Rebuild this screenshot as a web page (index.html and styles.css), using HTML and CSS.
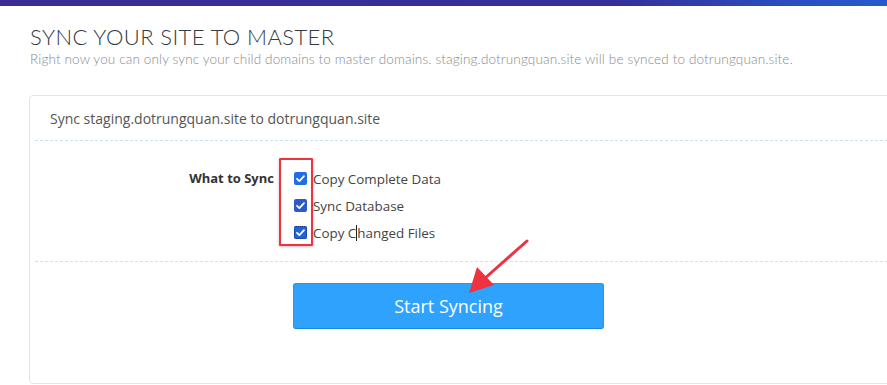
FILE: index.html
```html
<!DOCTYPE html>
<html>
<head>
<meta charset="utf-8">
<link rel="stylesheet" href="styles.css">
</head>
<body>
<div class="topbar"></div>
<div class="page">
  <h1 class="title">SYNC YOUR SITE TO MASTER</h1>
  <p class="subtitle">Right now you can only sync your child domains to master domains. staging.dotrungquan.site will be synced to dotrungquan.site.</p>
  <div class="card">
    <div class="card-head">Sync staging.dotrungquan.site to dotrungquan.site</div>
    <div class="card-body">
      <div class="form-row">
        <div class="label">What to Sync</div>
        <div class="checks">
          <div class="check"><span class="box"><svg viewBox="0 0 13 13" width="13" height="13"><path d="M3 6.8 L5.4 9.1 L10 4.2" fill="none" stroke="#fff" stroke-width="1.8" stroke-linecap="round" stroke-linejoin="round"/></svg></span><span class="ctext">Copy Complete Data</span></div>
          <div class="check"><span class="box dark"><svg viewBox="0 0 13 13" width="13" height="13"><path d="M3 6.8 L5.4 9.1 L10 4.2" fill="none" stroke="#fff" stroke-width="1.8" stroke-linecap="round" stroke-linejoin="round"/></svg></span><span class="ctext">Sync Database</span></div>
          <div class="check"><span class="box focus"><svg viewBox="0 0 13 13" width="13" height="13"><path d="M3 6.8 L5.4 9.1 L10 4.2" fill="none" stroke="#fff" stroke-width="1.8" stroke-linecap="round" stroke-linejoin="round"/></svg></span><span class="ctext">Copy C<span class="caret"></span>hanged Files</span></div>
          <div class="redbox"></div>
        </div>
      </div>
    </div>
    <div class="card-foot">
      <button class="btn">Start Syncing</button>
    </div>
  </div>
</div>
<svg class="arrow" width="887" height="385" viewBox="0 0 887 385">
  <line x1="527" y1="241" x2="484" y2="279" stroke="#ee3340" stroke-width="3" stroke-linecap="round"/>
  <polygon points="469,293 477,267 494,285" fill="#ee3340"/>
</svg>
</body>
</html>
```
FILE: styles.css
```css
html, body {
  margin: 0;
  padding: 0;
  background: #fff;
  overflow: hidden;
}
body {
  width: 887px;
  height: 385px;
  position: relative;
  font-family: "Open Sans", "Noto Sans", sans-serif;
}
.topbar {
  height: 6px;
  background: linear-gradient(90deg, #3a2c94 0%, #35309a 70%, #2a4fc0 90%, #2559cc 100%);
}
.page {
  padding-left: 29px;
}
.title {
  margin: 18px 0 0 1px;
  font-family: "Lato", sans-serif;
  font-weight: 300;
  font-size: 22px;
  line-height: 26px;
  color: #333a40;
  letter-spacing: 0.4px;
}
.subtitle {
  margin: 1px 0 0 1px;
  font-family: "Lato", sans-serif;
  font-weight: 300;
  font-size: 13.5px;
  line-height: 16px;
  color: #858a8e;
  letter-spacing: 0.15px;
}
.card {
  margin-top: 28px;
  width: 900px;
  height: 289px;
  border: 1px solid #dde7f0;
  border-radius: 4px;
  box-sizing: border-box;
}
.card-head {
  height: 44px;
  margin: 0 5px;
  padding-left: 15px;
  border-bottom: 1px dashed #cfe0ef;
  display: flex;
  align-items: center;
  font-size: 14px;
  color: #555;
}
.card-body {
  margin: 0 5px;
  padding: 24px 0 15px;
  border-bottom: 1px dashed #cfe0ef;
}
.form-row {
  display: grid;
  grid-template-columns: 239px auto;
  column-gap: 20px;
}
.label {
  text-align: right;
  font-weight: 700;
  font-size: 13px;
  color: #333;
  line-height: 27px;
}
.checks {
  position: relative;
  display: flex;
  flex-direction: column;
}
.check {
  height: 27px;
  display: flex;
  align-items: center;
  font-size: 13.4px;
  color: #444;
}
.box {
  width: 13px;
  height: 13px;
  border-radius: 2px;
  background: #1f6ee6;
  display: inline-flex;
  margin-right: 6px;
}
.box.dark { background: #2b5bc9; }
.box.focus { background: #1d64e0; outline: 1px dotted #1a2f80; outline-offset: -1px; }
.caret {
  display: inline-block;
  width: 1px;
  height: 16px;
  background: #222;
  vertical-align: -3px;
}
.redbox {
  position: absolute;
  left: -15px;
  top: -7px;
  width: 34px;
  height: 88px;
  border: 2px solid #ee3340;
  box-sizing: border-box;
  border-radius: 1px;
  box-shadow: 0 1px 3px rgba(0,0,0,0.25);
}
.card-foot {
  padding: 21px 0 0 263px;
}
.btn {
  width: 311px;
  height: 46px;
  border: 1px solid #2396ef;
  border-bottom-color: #1a86e0;
  border-radius: 3px;
  background: #2ea2fc;
  color: #fff;
  font-family: "Open Sans", sans-serif;
  font-size: 18px;
  padding: 0;
}
.arrow {
  position: absolute;
  left: 0;
  top: 0;
  pointer-events: none;
}
```
